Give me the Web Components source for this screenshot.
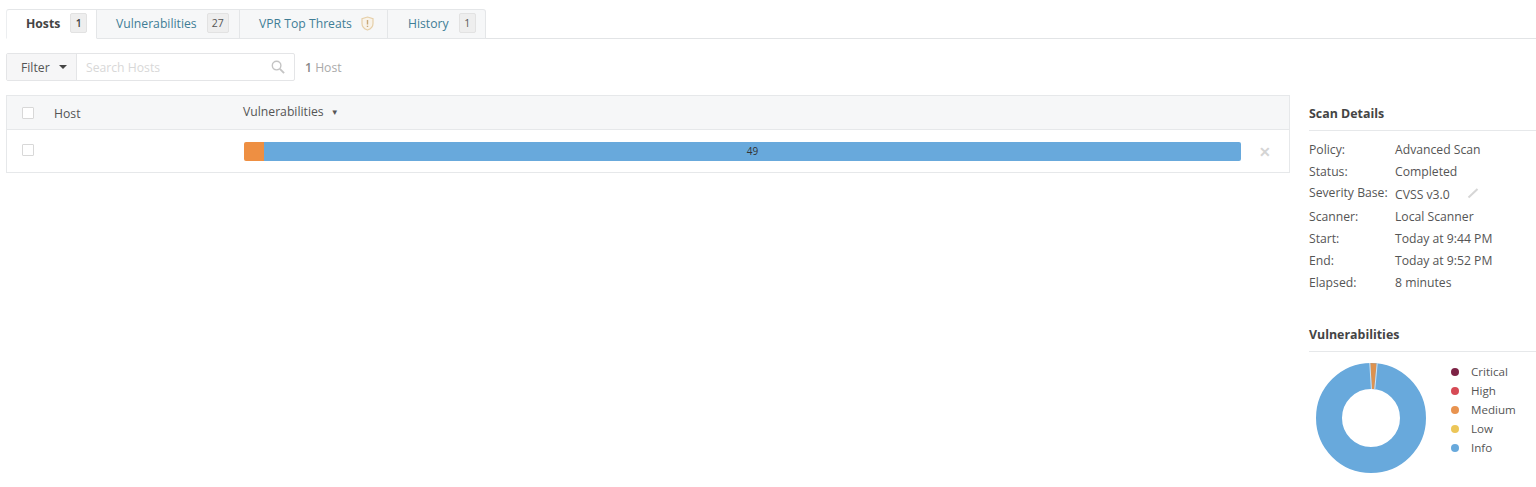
<!DOCTYPE html>
<html lang="en">
<head>
<meta charset="utf-8">
<title>Hosts</title>
<style>
    html, body { margin: 0; background: #fff; }
    body { font-family: "Open Sans", sans-serif; font-size: 12.2px; color: #555; height: 487px; overflow: hidden; }
</style>
</head>
<body>
<scan-page>
    <scan-tabs slot="tabs">
        <scan-tab active label="Hosts" count="1" width="91"></scan-tab>
        <scan-tab label="Vulnerabilities" count="27" width="143"></scan-tab>
        <scan-tab label="VPR Top Threats" shield width="148"></scan-tab>
        <scan-tab label="History" count="1" width="98"></scan-tab>
    </scan-tabs>
    <filter-bar slot="main"></filter-bar>
    <host-table slot="main"></host-table>
    <scan-details slot="side"></scan-details>
    <vuln-chart slot="side"></vuln-chart>
</scan-page>

<script>
class ScanPage extends HTMLElement {
    constructor() {
        super();
        this.attachShadow({ mode: 'open' });
        this.shadowRoot.innerHTML = /*html*/`
        <style>
            :host { display: block; padding-top: 9px; }
            .content { display: flex; }
            .main { width: 1284px; margin-left: 6px; flex: none; }
            .side { margin-left: 19px; flex: 1; min-width: 0; }
        </style>
        <slot name="tabs"></slot>
        <div class="content">
            <div class="main"><slot name="main"></slot></div>
            <div class="side"><slot name="side"></slot></div>
        </div>`;
    }
}
customElements.define('scan-page', ScanPage);

class ScanTabs extends HTMLElement {
    constructor() {
        super();
        this.attachShadow({ mode: 'open' });
        this.shadowRoot.innerHTML = /*html*/`
        <style>
            :host { display: flex; height: 30px; padding-left: 6px; box-sizing: border-box; }
            :host::after { content: ""; flex: 1; border-bottom: 1px solid #e2e4e6; }
        </style>
        <slot></slot>`;
    }
}
customElements.define('scan-tabs', ScanTabs);

class ScanTab extends HTMLElement {
    constructor() {
        super();
        this.attachShadow({ mode: 'open' });
    }
    connectedCallback() {
        const count = this.getAttribute('count');
        const shield = this.hasAttribute('shield');
        this.style.width = this.getAttribute('width') + 'px';
        this.shadowRoot.innerHTML = /*html*/`
        <style>
            :host {
                display: flex; align-items: center; gap: 10px;
                box-sizing: border-box; height: 30px;
                background: #f6f7f8; color: #3f7d96;
                border: 1px solid #e4e6e8; border-left: 0;
                font-size: 12.2px;
                padding: 0 0 2px 19px;
            }
            :host(:last-child) { border-top-right-radius: 3px; padding-left: 20px; }
            :host([active]) {
                background: #fff; color: #444; font-weight: 700;
                border-bottom-color: #fff;
                border-left: 1px solid #eceef0;
                border-top-left-radius: 3px;
            }
            .count {
                min-width: 7px; height: 18px; line-height: 18px; padding: 0 4px;
                background: #eeeeee; border: 1px solid #e2e2e2; border-radius: 2px;
                color: #555; font-size: 10.5px; font-weight: 400; text-align: center;
            }
            :host([active]) .count { font-weight: 600; color: #444; }
            svg { width: 13px; height: 15px; display: block; margin-left: -1px; }
        </style>
        <span>${this.getAttribute('label')}</span>
        ${count ? `<span class="count">${count}</span>` : ''}
        ${shield ? `<svg viewBox="0 0 13 15"><path d="M6.5 1 L12 2.6 V7.5 C12 10.8 9.5 13 6.5 14 C3.5 13 1 10.8 1 7.5 V2.6 Z" fill="#f8f3ea" stroke="#e6cfa8" stroke-width="1.2"/><path d="M6.5 4 V8.4 M6.5 9.8 V11" stroke="#c9a878" stroke-width="1.4"/></svg>` : ''}
        `;
    }
}
customElements.define('scan-tab', ScanTab);

class FilterBar extends HTMLElement {
    constructor() {
        super();
        this.attachShadow({ mode: 'open' });
        this.shadowRoot.innerHTML = /*html*/`
        <style>
            :host { display: flex; align-items: center; height: 28px; margin-top: 14px; }
            .box { display: flex; width: 289px; height: 28px; box-sizing: border-box; border: 1px solid #e4e5e7; border-radius: 2px; }
            .btn {
                width: 70px; flex: none; box-sizing: border-box; display: flex; align-items: center; gap: 9px;
                padding-left: 14px; background: #f6f6f7; border-right: 1px solid #e4e5e7; color: #555;
            }
            .caret { width: 0; height: 0; border: 4px solid transparent; border-top: 4px solid #444; border-bottom: 0; }
            .search { flex: 1; display: flex; align-items: center; justify-content: space-between; padding: 0 9px; color: #d8d8d8; }
            svg { width: 14px; height: 14px; display: block; }
            .total { margin-left: 10px; color: #aaa; }
            .total b { color: #888; font-weight: 600; }
        </style>
        <div class="box">
            <div class="btn">Filter <span class="caret"></span></div>
            <div class="search"><span>Search Hosts</span>
                <svg viewBox="0 0 15 15" fill="none" stroke="#c4c4c4" stroke-width="1.5"><circle cx="6" cy="6" r="4.6"/><path d="M9.5 9.5 L14 14" stroke-width="2"/></svg>
            </div>
        </div>
        <div class="total"><b>1</b> Host</div>`;
    }
}
customElements.define('filter-bar', FilterBar);

class HostTable extends HTMLElement {
    constructor() {
        super();
        this.attachShadow({ mode: 'open' });
        this.shadowRoot.innerHTML = /*html*/`
        <style>
            :host { display: block; margin-top: 14px; border: 1px solid #e6e8ea; box-sizing: border-box; height: 78px; }
            .head, .row { display: grid; grid-template-columns: 47px 190px 997px 1fr; align-items: center; }
            .head { height: 33px; background: #f6f7f8; border-bottom: 1px solid #e6e8ea; }
            .row { height: 43px; }
            .check { width: 10px; height: 10px; margin-left: 15px; border: 1px solid #d8d8d8; background: #fff; border-radius: 1px; }
            .row .check { margin-top: -3px; }
            .host { margin-top: 1px; }
            .sort { display: inline-block; margin-left: 7px; font-size: 8px; vertical-align: 1px; }
            .vuln-head { margin: -2px 0 0 -1px; }
            .bar { display: flex; height: 19px; border-radius: 2px; overflow: hidden; }
            .medium { width: 20px; background: #ee8f42; }
            .info { flex: 1; background: #68a9dc; color: #333; font-size: 10px; line-height: 19px; text-align: center; }
            .close { color: #d4d4d4; font-size: 14px; padding-left: 18px; font-weight: 700; }
        </style>
        <div class="head">
            <div class="check"></div>
            <div class="host">Host</div>
            <div class="vuln-head">Vulnerabilities<span class="sort">▼</span></div>
            <div></div>
        </div>
        <div class="row">
            <div class="check"></div>
            <div></div>
            <div class="bar"><div class="medium"></div><div class="info">49</div></div>
            <div class="close">✕</div>
        </div>`;
    }
}
customElements.define('host-table', HostTable);

class ScanDetails extends HTMLElement {
    constructor() {
        super();
        this.attachShadow({ mode: 'open' });
        const rows = [
            ['Policy:', 'Advanced Scan'],
            ['Status:', 'Completed'],
            ['Severity Base:', 'CVSS v3.0'],
            ['Scanner:', 'Local Scanner'],
            ['Start:', 'Today at 9:44 PM'],
            ['End:', 'Today at 9:52 PM'],
            ['Elapsed:', '8 minutes']
        ];
        this.shadowRoot.innerHTML = /*html*/`
        <style>
            :host { display: block; box-sizing: border-box; padding-top: 58px; height: 279px; }
            .title { height: 33px; line-height: 33px; border-bottom: 1px solid #e6e8ea; font-size: 12.4px; font-weight: 700; color: #444; }
            .list { padding-top: 7px; display: grid; grid-template-columns: 86px 1fr; grid-template-rows: 22px 22px 23px 22px 22px 22px 22px; align-items: center; }
            .list > div:nth-child(5) { margin-top: -3px; }
            .val { display: flex; align-items: center; gap: 17px; }
            .list > .val:nth-child(6) { margin-top: 1px; }
            svg { width: 12px; height: 12px; display: block; margin-top: -3px; }
        </style>
        <div class="title">Scan Details</div>
        <div class="list">
            ${rows.map(([k, v]) => `<div>${k}</div><div class="val"><span>${v}</span>${v.startsWith('CVSS') ? `<svg viewBox="0 0 12 12"><path d="M1.5 10.5 L10.5 2" stroke="#d6d6d6" stroke-width="2"/></svg>` : ''}</div>`).join('')}
        </div>`;
    }
}
customElements.define('scan-details', ScanDetails);

class VulnChart extends HTMLElement {
    constructor() {
        super();
        this.attachShadow({ mode: 'open' });
        const items = [['Critical', '#7d2345'], ['High', '#d64a55'], ['Medium', '#e8934f'], ['Low', '#ecc658'], ['Info', '#68a9dc']];
        this.shadowRoot.innerHTML = /*html*/`
        <style>
            :host { display: block; }
            .title { height: 33px; line-height: 33px; border-bottom: 1px solid #e6e8ea; font-size: 12.4px; font-weight: 700; color: #444; }
            .body { display: flex; margin-top: 10px; }
            svg { width: 112px; height: 112px; margin-left: 6px; flex: none; display: block; }
            ul { list-style: none; margin: 0 0 0 24px; padding: 0; display: flex; flex-direction: column; font-size: 11.6px; }
            li { display: flex; align-items: center; gap: 12px; height: 19px; }
            i { width: 8px; height: 8px; border-radius: 50%; display: block; }
        </style>
        <div class="title">Vulnerabilities</div>
        <div class="body">
            <svg viewBox="0 0 112 112">
                <circle cx="56" cy="56" r="42" fill="none" stroke="#68a9dc" stroke-width="26"/>
                <path d="M55.3 1 L61.6 1.4 L59.2 27 L57 27 Z" fill="#dd9250"/>
                <path d="M54.8 1 L56.4 27 M62.2 1.4 L59.8 27" stroke="#fff" stroke-width=".7"/>
            </svg>
            <ul>${items.map(([n, c]) => `<li><i style="background:${c}"></i>${n}</li>`).join('')}</ul>
        </div>`;
    }
}
customElements.define('vuln-chart', VulnChart);
</script>
</body>
</html>
